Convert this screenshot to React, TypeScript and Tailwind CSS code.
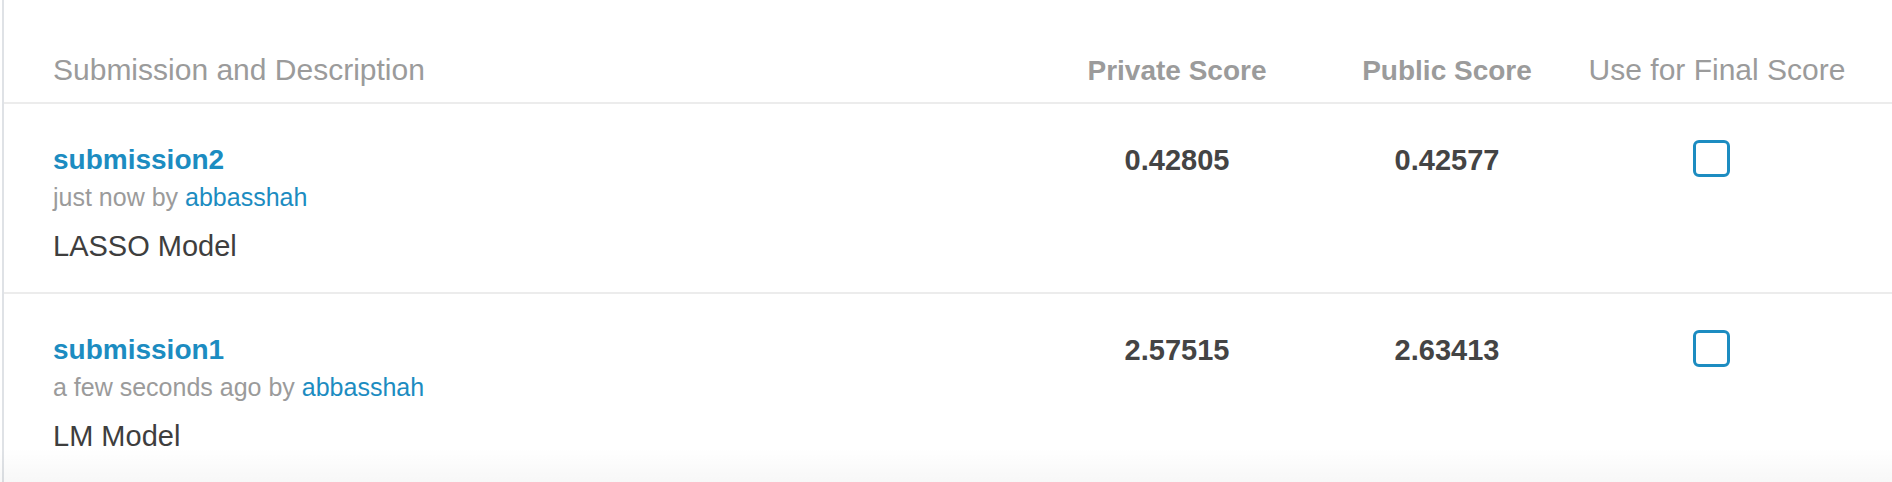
const submissions = [
  {
    name: 'submission2',
    when: 'just now',
    user: 'abbasshah',
    description: 'LASSO Model',
    privateScore: '0.42805',
    publicScore: '0.42577',
  },
  {
    name: 'submission1',
    when: 'a few seconds ago',
    user: 'abbasshah',
    description: 'LM Model',
    privateScore: '2.57515',
    publicScore: '2.63413',
  },
];

export default function App() {
  return (
    <div className="relative h-[482px] overflow-hidden bg-white font-['Liberation_Sans',Arial,sans-serif]">
      <div className="ml-[2px] h-full border-l-2 border-[#dfe2e6]">
        {/* Header */}
        <div className="flex h-[104px] items-baseline border-b-2 border-[#ececec] pr-[40px] pt-[52px] text-[#9b9b9b]">
          <div className="flex-1 pl-[49px] text-[30px] leading-[36px]">Submission and Description</div>
          <div className="w-[270px] text-center text-[28px] font-bold leading-[36px]">Private Score</div>
          <div className="w-[270px] text-center text-[28px] font-bold leading-[36px]">Public Score</div>
          <div className="w-[270px] text-center text-[30px] leading-[36px]">Use for Final Score</div>
        </div>

        {/* Rows */}
        {submissions.map((s) => (
          <div key={s.name} className="flex h-[190px] items-start border-b-2 border-[#ececec] pr-[40px]">
            <div className="flex-1 pl-[49px] pt-[39px]">
              <a href="#" className="block text-[28px] font-bold leading-[34px] text-[#1c8cc1]">
                {s.name}
              </a>
              <div className="text-[25px] leading-[40px] text-[#9b9b9b]">
                {s.when} by <a href="#" className="text-[#1c8cc1]">{s.user}</a>
              </div>
              <div className="mt-[12px] text-[29px] leading-[34px] text-[#3e3e3e]">{s.description}</div>
            </div>
            <div className="w-[270px] pt-[39px] text-center text-[29px] font-bold leading-[34px] text-[#444444]">
              {s.privateScore}
            </div>
            <div className="w-[270px] pt-[39px] text-center text-[29px] font-bold leading-[34px] text-[#444444]">
              {s.publicScore}
            </div>
            <div className="flex w-[270px] justify-center pr-3 pt-[36px]">
              <button
                aria-label="Use for final score"
                className="h-[37px] w-[37px] rounded-[6px] border-[3px] border-[#1c8cc1] bg-white"
              />
            </div>
          </div>
        ))}
      </div>

      {/* bottom fade */}
      <div className="pointer-events-none absolute inset-x-0 bottom-0 h-[34px] bg-linear-to-b from-black/0 to-black/[0.03]" />
    </div>
  );
}
